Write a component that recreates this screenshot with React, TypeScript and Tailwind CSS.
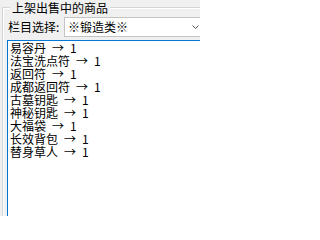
import React from "react";

const items = [
  "易容丹",
  "法宝洗点符",
  "返回符",
  "成都返回符",
  "古墓钥匙",
  "神秘钥匙",
  "大福袋",
  "长效背包",
  "替身草人",
];

export default function App() {
  return (
    <div className="relative h-[216px] w-[200px] overflow-hidden bg-[#f0f0f0] font-['Noto_Sans_CJK_SC',sans-serif] text-[12px] text-black">
      {/* group box */}
      <div className="ml-[2px] mt-[7px] h-[240px] w-[230px] border-l border-t border-[#d5d5d5] shadow-[inset_1px_1px_0_#ffffff]">
        <div className="flex items-center pl-[5px] pt-[9px]">
          <span className="w-[56px] whitespace-nowrap leading-[20px]">栏目选择:</span>
          <div className="flex h-[20px] w-[142px] items-center justify-between border border-[#c4c4c4] bg-white pl-[3px] pr-[6px]">
            <span className="leading-[18px]">※锻造类※</span>
            <svg width="7" height="4" viewBox="0 0 7 4">
              <polyline points="0.5,0.5 3.5,3.5 6.5,0.5" fill="none" stroke="#5a5a5a" strokeWidth="1" />
            </svg>
          </div>
        </div>
        <div className="ml-[4px] mt-[3px] h-[200px] border-l border-t border-[#0078d7] bg-white pl-[2px]">
          {items.map((name) => (
            <div key={name} className="flex h-[13px] items-center whitespace-nowrap leading-[13px]">
              <span>{name}</span>
              <span className="ml-[6px]">→</span>
              <span className="ml-[6px]">1</span>
            </div>
          ))}
        </div>
      </div>
      <span className="absolute left-[10px] top-0 bg-[#f0f0f0] px-[2px] leading-[15px]">上架出售中的商品</span>
    </div>
  );
}
